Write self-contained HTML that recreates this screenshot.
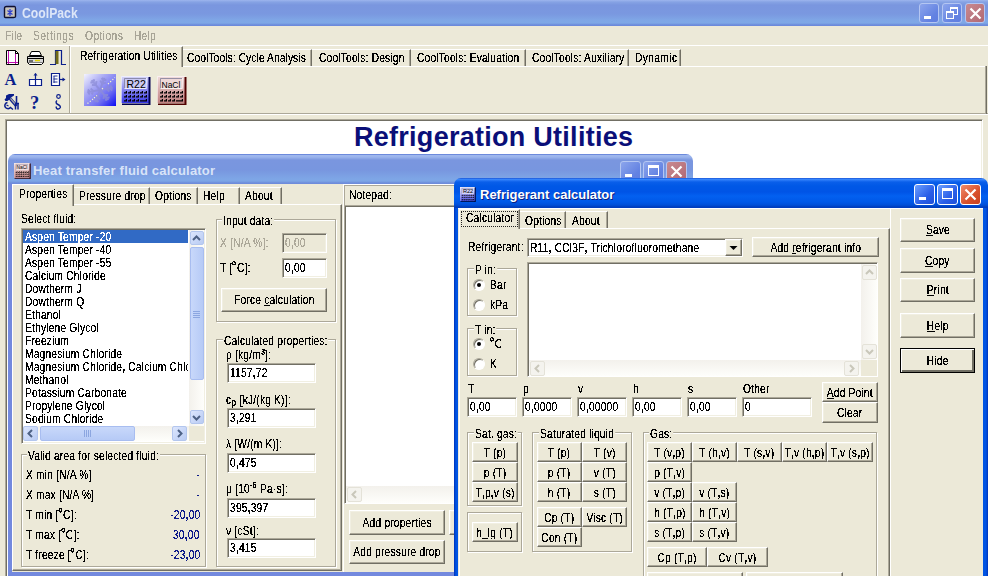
<!DOCTYPE html><html><head><meta charset="utf-8"><style>
*{margin:0;padding:0;box-sizing:border-box}
html,body{width:988px;height:576px;overflow:hidden;background:#ECE9D8;position:relative}
body>div,div>div{position:absolute}
.t{font:11px/13px "Liberation Sans",sans-serif;letter-spacing:0.2px;white-space:nowrap;color:#000;height:13px}
.i{display:inline-block;transform:scale(0.93,1.15);transform-origin:0 7px}
.s{display:inline-block;transform:scale(0.93,1.15);letter-spacing:0.2px}
.edit .s{transform-origin:0 50%}
.f{display:inline-block;width:max-content;filter:url(#th)}
.glab{background:#ECE9D8;padding:0 1px}
.btn{font:11px "Liberation Sans",sans-serif;text-align:center;white-space:nowrap;background:#ECE9D8;
 border:1px solid;border-color:#fff #716F64 #716F64 #fff;box-shadow:inset -1px -1px #ACA899,inset 1px 1px #F1EFE2}
.dbtn{border:1px solid #000;box-shadow:inset 1px 1px #fff,inset -2px -2px #716F64,inset -1px -1px #ACA899}
.edit{font:11px "Liberation Sans",sans-serif;white-space:nowrap;background:#fff;padding-left:2px;
 border:1px solid;border-color:#ACA899 #fff #fff #ACA899;box-shadow:inset 1px 1px #716F64,inset -1px -1px #F1EFE2}
.dis{background:#ECE9D8;color:#ACA899}
.grp{border:1px solid #ACA899;box-shadow:inset 1px 1px #fff,1px 1px #fff}
.sunk{border:1px solid;border-color:#ACA899 #fff #fff #ACA899;box-shadow:inset 1px 1px #716F64,inset -1px -1px #F1EFE2}
.raise{border:1px solid;border-color:#fff #716F64 #716F64 #fff;box-shadow:inset -1px -1px #ACA899,inset 1px 1px #F1EFE2}
.u{text-decoration:underline}
</style></head><body><svg width="0" height="0" style="position:absolute"><filter id="th" x="-10%" y="-50%" width="120%" height="200%"><feComponentTransfer><feFuncA type="discrete" tableValues="0 0 0 0 1 1 1 1 1 1 1"/></feComponentTransfer></filter></svg><div style="left:0px;top:0px;width:988px;height:26px;background:linear-gradient(#9DB5EE 0,#86A3E4 2px,#7A96DF 5px,#7A98E0 14px,#7FA6E6 20px,#7EA8E6 23px,#6C8ADB 25px,#6C8ADB 26px)"></div>
<svg style="position:absolute;left:3px;top:5px" width="14" height="14"><path d="M1.5 3.5Q1.5 1.5 3.5 1.5H11.5Q12.5 1.5 12.5 3.5V11.5Q12.5 12.5 10.5 12.5H2.5Q1.5 12.5 1.5 11.5Z" fill="#C8C4B8" stroke="#101030" stroke-width="1.4"/><path d="M3 2.5H11" stroke="#8888A0"/><path d="M7 4V11M4.5 5.5L9.5 9.5M9.5 5.5L4.5 9.5" stroke="#3040D0" stroke-width="1.3"/></svg>
<div class="tb" style="left:22px;top:5px;font:bold 13px/18px 'Liberation Sans',sans-serif;color:#DCE6F8;white-space:nowrap;transform:scale(0.94,1.1);transform-origin:0 13px">CoolPack</div>
<div style="left:919px;top:3px;width:20px;height:20px;border:1px solid #B4C6F2;border-radius:3px;background:linear-gradient(135deg,#8CA5EC,#6382E2 70%,#5F7EE0)"></div>
<div style="left:924px;top:16px;width:7px;height:3px;background:#fff"></div>
<div style="left:942px;top:3px;width:20px;height:20px;border:1px solid #B4C6F2;border-radius:3px;background:linear-gradient(135deg,#8CA5EC,#6382E2 70%,#5F7EE0)"></div>
<div style="left:950px;top:7px;width:8px;height:8px;border:1px solid #fff;border-top-width:2px"></div>
<div style="left:946px;top:11px;width:8px;height:8px;border:1px solid #fff;border-top-width:2px;background:#7690E0"></div>
<div style="left:965px;top:3px;width:20px;height:20px;border:1px solid #B4C6F2;border-radius:3px;background:linear-gradient(135deg,#C98A90,#B06874)"></div>
<svg style="position:absolute;left:965px;top:3px" width="21" height="21"><path d="M5.5 5.5L15.5 15.5M15.5 5.5L5.5 15.5" stroke="#fff" stroke-width="2.2"/></svg>
<div class="t" style="left:5px;top:30px;color:#A8A597;letter-spacing:0.2px"><span class="f"><span class="i">File</span></span></div>
<div class="t" style="left:33px;top:30px;color:#A8A597;letter-spacing:0.55px"><span class="f"><span class="i">Settings</span></span></div>
<div class="t" style="left:85px;top:30px;color:#A8A597;letter-spacing:0.45px"><span class="f"><span class="i">Options</span></span></div>
<div class="t" style="left:134px;top:30px;color:#A8A597;letter-spacing:0.2px"><span class="f"><span class="i">Help</span></span></div>
<div style="left:0px;top:45px;width:988px;height:1px;background:#fff"></div>
<div style="left:69px;top:46px;width:1px;height:67px;background:#ACA899"></div>
<div style="left:70px;top:46px;width:1px;height:67px;background:#fff"></div>
<div style="left:0px;top:113px;width:988px;height:1px;background:#ACA899"></div>
<div style="left:0px;top:114px;width:988px;height:1px;background:#fff"></div>
<div style="left:71px;top:66px;width:916px;height:1px;background:#fff"></div>
<div style="left:985px;top:66px;width:1px;height:47px;background:#ACA899"></div>
<div style="left:986px;top:66px;width:1px;height:48px;background:#716F64"></div>
<div style="left:70px;top:46px;width:113px;height:21px;background:#ECE9D8;border-left:1px solid #fff;border-top:1px solid #fff;border-right:1px solid #716F64;box-shadow:inset -1px 0 #ACA899"></div>
<div class="t" style="left:80px;top:50px;letter-spacing:0.15px"><span class="f"><span class="i">Refrigeration Utilities</span></span></div>
<div style="left:183px;top:49px;width:129px;height:17px;border-top:1px solid #fff;border-right:1px solid #716F64;box-shadow:inset -1px 0 #ACA899"></div>
<div class="t" style="left:187px;top:52px;letter-spacing:0.1px"><span class="f"><span class="i">CoolTools: Cycle Analysis</span></span></div>
<div style="left:312px;top:49px;width:99px;height:17px;border-top:1px solid #fff;border-right:1px solid #716F64;box-shadow:inset -1px 0 #ACA899"></div>
<div class="t" style="left:319px;top:52px;letter-spacing:0.2px"><span class="f"><span class="i">CoolTools: Design</span></span></div>
<div style="left:411px;top:49px;width:115px;height:17px;border-top:1px solid #fff;border-right:1px solid #716F64;box-shadow:inset -1px 0 #ACA899"></div>
<div class="t" style="left:417px;top:52px;letter-spacing:0.2px"><span class="f"><span class="i">CoolTools: Evaluation</span></span></div>
<div style="left:526px;top:49px;width:103px;height:17px;border-top:1px solid #fff;border-right:1px solid #716F64;box-shadow:inset -1px 0 #ACA899"></div>
<div class="t" style="left:532px;top:52px;letter-spacing:0.2px"><span class="f"><span class="i">CoolTools: Auxiliary</span></span></div>
<div style="left:629px;top:49px;width:52px;height:17px;border-top:1px solid #fff;border-right:1px solid #716F64;box-shadow:inset -1px 0 #ACA899"></div>
<div class="t" style="left:635px;top:52px;letter-spacing:0.4px"><span class="f"><span class="i">Dynamic</span></span></div>

<svg style="position:absolute;left:0;top:46px" width="70" height="66">
 <!-- page -->
 <path d="M6.5 4.5H15.5L18.5 7.5V18.5H6.5Z" fill="#fff" stroke="#000"/>
 <path d="M8.5 5V18M15.5 5V18M7 16.5H18" stroke="#C010B0" stroke-width="1"/>
 <path d="M15.5 4.5V7.5H18.5" fill="none" stroke="#000"/>
 <!-- printer -->
 <path d="M31.5 5.5H39.5L41.5 9.5H29.5Z" fill="#fff" stroke="#000"/>
 <path d="M27.5 10.5H43.5V16.5H27.5Z" fill="#D8D8D8" stroke="#000"/>
 <path d="M28 12.5H43M29 15H33" stroke="#000"/>
 <path d="M35 14.5H40" stroke="#E0D000" stroke-width="1.5"/>
 <path d="M27.5 16.5L29.5 18.5H41.5L43.5 16.5" fill="#fff" stroke="#000"/>
 <!-- exit -->
 <path d="M50 18.5H55.5V4.5H61.5V18.5H66" fill="none" stroke="#0A1E8C" stroke-width="1.2"/>
 <rect x="55.5" y="5" width="3" height="13" fill="#706A18"/>
 <!-- A -->
 <text x="4.5" y="39" font-family="Liberation Serif" font-weight="bold" font-size="16.5" fill="#0A1E8C">A</text>
 <!-- box arrow up -->
 <path d="M29.5 33.5H41.5V39.5H29.5ZM35.5 33.5V39.5M35.5 33V27.5" fill="#fff" stroke="#0A1E8C" stroke-width="1.2"/>
 <path d="M33.5 29.5L35.5 27L37.5 29.5Z" fill="#0A1E8C"/>
 <!-- box arrow right -->
 <path d="M51.5 27.5H59.5V39.5H51.5Z" fill="#fff" stroke="#0A1E8C" stroke-width="1.2"/>
 <path d="M53.5 30H57.5M53.5 33H57.5M53.5 36H57.5M54 30V37" stroke="#0A1E8C" stroke-width="0.9"/>
 <path d="M59.5 33.5H63.5" stroke="#0A1E8C" stroke-width="1.2"/>
 <path d="M62.5 31.5L65.5 33.5L62.5 35.5Z" fill="#0A1E8C"/>
 <!-- tools -->
 <path d="M6 49.5L9 48H14V49.5L11 51.5L9.5 53.5L7.5 55H5.5L4.5 53.5L6 52Z" fill="#0A1E8C"/>
 <path d="M10 52.5L16.5 60" stroke="#0A1E8C" stroke-width="3"/>
 <path d="M10.5 52.5L16 59" stroke="#A8A8A8" stroke-width="1.2"/>
 <path d="M16.5 50V57" stroke="#0A1E8C" stroke-width="1.6"/>
 <path d="M15.5 57.5V63.5M18 57.5V63.5" stroke="#0A1E8C" stroke-width="1.5"/>
 <path d="M15 57.5H19" stroke="#0A1E8C" stroke-width="1.5"/>
 <path d="M7.5 56.5C5 57 4 59.5 5.5 61.5C7 63 9.5 63 10.5 61.5L13 63.5" fill="none" stroke="#0A1E8C" stroke-width="1.5"/>
 <path d="M6.5 59L8.5 60" stroke="#0A1E8C" stroke-width="1.2"/>
 <!-- ? -->
 <text x="30" y="63" font-family="Liberation Serif" font-weight="bold" font-size="18.5" fill="#0A1E8C">?</text>
 <!-- i chain -->
 <circle cx="58.5" cy="50.5" r="1.8" fill="none" stroke="#0A1E8C" stroke-width="1.2"/>
 <path d="M57 54.5C55 56 56.5 58 58 58.5C60 59.5 61.5 61 59.5 62.5C57.5 64 55.5 62 56.5 60.5" fill="none" stroke="#0A1E8C" stroke-width="1.4"/>
</svg>

<svg style="position:absolute;left:84px;top:74px" width="32" height="32">
<defs><linearGradient id="sg" x1="0" y1="0" x2="1" y2="1"><stop offset="0" stop-color="#F4F4FE"/><stop offset="0.35" stop-color="#A8A8F4"/><stop offset="0.7" stop-color="#6A6AF2"/><stop offset="1" stop-color="#0A0AF4"/></linearGradient></defs>
<rect width="32" height="32" fill="url(#sg)"/>
<g stroke="#8C8CD8" stroke-width="2" fill="none" opacity="0.75"><g transform="rotate(20 16 16)"><path d="M16 16V3M13 7L16 9.5L19 7M13.5 4L16 6L18.5 4"/></g><g transform="rotate(80 16 16)"><path d="M16 16V3M13 7L16 9.5L19 7M13.5 4L16 6L18.5 4"/></g><g transform="rotate(140 16 16)"><path d="M16 16V3M13 7L16 9.5L19 7M13.5 4L16 6L18.5 4"/></g><g transform="rotate(200 16 16)"><path d="M16 16V3M13 7L16 9.5L19 7M13.5 4L16 6L18.5 4"/></g><g transform="rotate(260 16 16)"><path d="M16 16V3M13 7L16 9.5L19 7M13.5 4L16 6L18.5 4"/></g><g transform="rotate(320 16 16)"><path d="M16 16V3M13 7L16 9.5L19 7M13.5 4L16 6L18.5 4"/></g></g>
<path d="M3.5 29.5L9 25M10 24L13 21.5M18 15L20 13.5M24 10L31 3.5" stroke="#F8F8C8" stroke-width="1.2" stroke-dasharray="1.2 1.8" fill="none"/>
</svg>
<svg style="position:absolute;left:121px;top:76px" width="30" height="29" viewBox="0 0 30 29" preserveAspectRatio="none">
<defs><linearGradient id="g121" x1="0" y1="0" x2="0" y2="1"><stop offset="0" stop-color="#D8D8F8"/><stop offset="1" stop-color="#3838E8"/></linearGradient></defs>
<rect x="0" y="0" width="28" height="27" fill="url(#g121)"/>
<path d="M0.5 27V0.5H28" stroke="#fff" stroke-width="1" fill="none" opacity="0.6"/>
<path d="M28.5 1V28.5H1" stroke="#000050" stroke-width="2" fill="none"/>
<rect x="3" y="2" width="22" height="11" fill="#C8C8F4"/>
<path d="M3.5 12.5V2.5H25" stroke="#707090" fill="none" opacity="0.7"/>
<path d="M3.5 12.5H25.5V2" stroke="#fff" fill="none" opacity="0.6"/>
<text x="5.5" y="11.5" font-family="Liberation Sans" font-size="10.5" fill="#000">R22</text>
<g fill="#000"><path d="M3 17.5h3v-2.5h-1.2v1.3h-1.8z"/><path d="M7 17.5h3v-2.5h-1.2v1.3h-1.8z"/><path d="M11 17.5h3v-2.5h-1.2v1.3h-1.8z"/><path d="M15 17.5h3v-2.5h-1.2v1.3h-1.8z"/><path d="M19 17.5h3v-2.5h-1.2v1.3h-1.8z"/><path d="M23 17.5h3v-2.5h-1.2v1.3h-1.8z"/><path d="M3 21.5h3v-2.5h-1.2v1.3h-1.8z"/><path d="M7 21.5h3v-2.5h-1.2v1.3h-1.8z"/><path d="M11 21.5h3v-2.5h-1.2v1.3h-1.8z"/><path d="M15 21.5h3v-2.5h-1.2v1.3h-1.8z"/><path d="M19 21.5h3v-2.5h-1.2v1.3h-1.8z"/><path d="M23 21.5h3v-2.5h-1.2v1.3h-1.8z"/><path d="M3 25.5h3v-2.5h-1.2v1.3h-1.8z"/><path d="M7 25.5h3v-2.5h-1.2v1.3h-1.8z"/><path d="M11 25.5h3v-2.5h-1.2v1.3h-1.8z"/><path d="M15 25.5h3v-2.5h-1.2v1.3h-1.8z"/><path d="M19 25.5h7v-2.5h-1.2v1.3h-5.8z"/></g>
</svg>
<svg style="position:absolute;left:157px;top:76px" width="30" height="29" viewBox="0 0 30 29" preserveAspectRatio="none">
<defs><linearGradient id="g157" x1="0" y1="0" x2="0" y2="1"><stop offset="0" stop-color="#F0DCDC"/><stop offset="1" stop-color="#C08080"/></linearGradient></defs>
<rect x="0" y="0" width="28" height="27" fill="url(#g157)"/>
<path d="M0.5 27V0.5H28" stroke="#fff" stroke-width="1" fill="none" opacity="0.6"/>
<path d="M28.5 1V28.5H1" stroke="#500000" stroke-width="2" fill="none"/>
<rect x="3" y="2" width="22" height="11" fill="#EED8D8"/>
<path d="M3.5 12.5V2.5H25" stroke="#707090" fill="none" opacity="0.7"/>
<path d="M3.5 12.5H25.5V2" stroke="#fff" fill="none" opacity="0.6"/>
<text x="4.5" y="11.5" font-family="Liberation Sans" font-size="8.5" fill="#000">NaCl</text>
<g fill="#000"><path d="M3 17.5h3v-2.5h-1.2v1.3h-1.8z"/><path d="M7 17.5h3v-2.5h-1.2v1.3h-1.8z"/><path d="M11 17.5h3v-2.5h-1.2v1.3h-1.8z"/><path d="M15 17.5h3v-2.5h-1.2v1.3h-1.8z"/><path d="M19 17.5h3v-2.5h-1.2v1.3h-1.8z"/><path d="M23 17.5h3v-2.5h-1.2v1.3h-1.8z"/><path d="M3 21.5h3v-2.5h-1.2v1.3h-1.8z"/><path d="M7 21.5h3v-2.5h-1.2v1.3h-1.8z"/><path d="M11 21.5h3v-2.5h-1.2v1.3h-1.8z"/><path d="M15 21.5h3v-2.5h-1.2v1.3h-1.8z"/><path d="M19 21.5h3v-2.5h-1.2v1.3h-1.8z"/><path d="M23 21.5h3v-2.5h-1.2v1.3h-1.8z"/><path d="M3 25.5h3v-2.5h-1.2v1.3h-1.8z"/><path d="M7 25.5h3v-2.5h-1.2v1.3h-1.8z"/><path d="M11 25.5h3v-2.5h-1.2v1.3h-1.8z"/><path d="M15 25.5h3v-2.5h-1.2v1.3h-1.8z"/><path d="M19 25.5h7v-2.5h-1.2v1.3h-5.8z"/></g>
</svg>
<div style="left:5px;top:119px;width:978px;height:457px;background:#fff;border-left:1px solid #ACA899;border-top:1px solid #ACA899;border-right:1px solid #fff;box-shadow:inset 1px 1px #716F64,inset -1px 0 #F1EFE2"></div>
<div style="left:354px;top:120px;font:bold 27px/34px 'Liberation Sans',sans-serif;letter-spacing:0.27px;color:#0A0F78;white-space:nowrap">Refrigeration Utilities</div>
<div style="left:8px;top:154px;width:685px;height:30px;background:linear-gradient(#6C8ADB 0,#6C8ADB 1px,#A0B8EE 1px,#9AB4EC 3px,#7A96DF 6px,#7896DF 16px,#7EA6E6 25px,#7DA6E6 27px,#6E8CDB 29px,#6E8CDB 30px);border-radius:7px 7px 0 0"></div>
<div style="left:8px;top:184px;width:4px;height:392px;background:#7389DE"></div>
<div style="left:12px;top:572px;width:443px;height:4px;background:#7389DE"></div>
<div style="left:12px;top:184px;width:443px;height:388px;background:#ECE9D8"></div>
<svg style="position:absolute;left:14px;top:163px" width="17" height="16" viewBox="0 0 30 29" preserveAspectRatio="none">
<defs><linearGradient id="g14" x1="0" y1="0" x2="0" y2="1"><stop offset="0" stop-color="#F0DCDC"/><stop offset="1" stop-color="#C08080"/></linearGradient></defs>
<rect x="0" y="0" width="28" height="27" fill="url(#g14)"/>
<path d="M0.5 27V0.5H28" stroke="#fff" stroke-width="1" fill="none" opacity="0.6"/>
<path d="M28.5 1V28.5H1" stroke="#300000" stroke-width="2" fill="none"/>
<rect x="3" y="2" width="22" height="11" fill="#EED8D8"/>
<path d="M3.5 12.5V2.5H25" stroke="#707090" fill="none" opacity="0.7"/>
<path d="M3.5 12.5H25.5V2" stroke="#fff" fill="none" opacity="0.6"/>
<text x="4.5" y="11.5" font-family="Liberation Sans" font-size="8.5" fill="#000">NaCl</text>
<g fill="#000"><path d="M3 17.5h3v-2.5h-1.2v1.3h-1.8z"/><path d="M7 17.5h3v-2.5h-1.2v1.3h-1.8z"/><path d="M11 17.5h3v-2.5h-1.2v1.3h-1.8z"/><path d="M15 17.5h3v-2.5h-1.2v1.3h-1.8z"/><path d="M19 17.5h3v-2.5h-1.2v1.3h-1.8z"/><path d="M23 17.5h3v-2.5h-1.2v1.3h-1.8z"/><path d="M3 21.5h3v-2.5h-1.2v1.3h-1.8z"/><path d="M7 21.5h3v-2.5h-1.2v1.3h-1.8z"/><path d="M11 21.5h3v-2.5h-1.2v1.3h-1.8z"/><path d="M15 21.5h3v-2.5h-1.2v1.3h-1.8z"/><path d="M19 21.5h3v-2.5h-1.2v1.3h-1.8z"/><path d="M23 21.5h3v-2.5h-1.2v1.3h-1.8z"/><path d="M3 25.5h3v-2.5h-1.2v1.3h-1.8z"/><path d="M7 25.5h3v-2.5h-1.2v1.3h-1.8z"/><path d="M11 25.5h3v-2.5h-1.2v1.3h-1.8z"/><path d="M15 25.5h3v-2.5h-1.2v1.3h-1.8z"/><path d="M19 25.5h7v-2.5h-1.2v1.3h-5.8z"/></g>
</svg>
<div style="left:33px;top:162px;font:bold 13px/18px 'Liberation Sans',sans-serif;letter-spacing:0.2px;color:#D8E4F8;white-space:nowrap">Heat transfer fluid calculator</div>
<div style="left:620px;top:161px;width:21px;height:21px;border:1px solid #B4C6F2;border-radius:3px;background:linear-gradient(135deg,#8CA5EC,#6382E2 70%,#5F7EE0)"></div>
<div style="left:625px;top:174px;width:7px;height:3px;background:#fff"></div>
<div style="left:643px;top:161px;width:21px;height:21px;border:1px solid #B4C6F2;border-radius:3px;background:linear-gradient(135deg,#8CA5EC,#6382E2 70%,#5F7EE0)"></div>
<div style="left:648px;top:165px;width:11px;height:11px;border:1px solid #fff;border-top-width:3px"></div>
<div style="left:666px;top:161px;width:21px;height:21px;border:1px solid #B4C6F2;border-radius:3px;background:linear-gradient(135deg,#C98A90,#B06874)"></div>
<svg style="position:absolute;left:666px;top:161px" width="21" height="21"><path d="M5.5 5.5L15.5 15.5M15.5 5.5L5.5 15.5" stroke="#fff" stroke-width="2.2"/></svg>
<div style="left:12px;top:204px;width:330px;height:367px;border-left:1px solid #fff;border-top:1px solid #fff;border-right:1px solid #716F64;border-bottom:1px solid #716F64;box-shadow:inset -1px -1px #ACA899"></div>
<div style="left:12px;top:184px;width:62px;height:22px;background:#ECE9D8;border-left:1px solid #fff;border-top:1px solid #fff;border-right:1px solid #716F64;box-shadow:inset -1px 0 #ACA899"></div>
<div class="t" style="left:19px;top:188px;"><span class="f"><span class="i">Properties</span></span></div>
<div style="left:74px;top:187px;width:76px;height:17px;border-top:1px solid #fff;border-right:1px solid #716F64;box-shadow:inset -1px 0 #ACA899"></div>
<div class="t" style="left:79px;top:190px;"><span class="f"><span class="i">Pressure drop</span></span></div>
<div style="left:150px;top:187px;width:48px;height:17px;border-top:1px solid #fff;border-right:1px solid #716F64;box-shadow:inset -1px 0 #ACA899"></div>
<div class="t" style="left:155px;top:190px;"><span class="f"><span class="i">Options</span></span></div>
<div style="left:198px;top:187px;width:42px;height:17px;border-top:1px solid #fff;border-right:1px solid #716F64;box-shadow:inset -1px 0 #ACA899"></div>
<div class="t" style="left:203px;top:190px;"><span class="f"><span class="i">Help</span></span></div>
<div style="left:240px;top:187px;width:42px;height:17px;border-top:1px solid #fff;border-right:1px solid #716F64;box-shadow:inset -1px 0 #ACA899"></div>
<div class="t" style="left:245px;top:190px;"><span class="f"><span class="i">About</span></span></div>
<div class="t" style="left:21px;top:213px;"><span class="f"><span class="i">Select fluid:</span></span></div>
<div class="sunk" style="left:21px;top:228px;width:185px;height:216px;background:#fff"></div>
<div style="left:23px;top:230px;width:165px;height:13px;background:#316AC5"></div>
<div class="t" style="left:25px;top:231px;color:#fff;width:163px;overflow:hidden"><span class="f"><span class="i">Aspen Temper -20</span></span></div>
<div class="t" style="left:25px;top:244px;width:163px;overflow:hidden"><span class="f"><span class="i">Aspen Temper -40</span></span></div>
<div class="t" style="left:25px;top:257px;width:163px;overflow:hidden"><span class="f"><span class="i">Aspen Temper -55</span></span></div>
<div class="t" style="left:25px;top:270px;width:163px;overflow:hidden"><span class="f"><span class="i">Calcium Chloride</span></span></div>
<div class="t" style="left:25px;top:283px;width:163px;overflow:hidden"><span class="f"><span class="i">Dowtherm J</span></span></div>
<div class="t" style="left:25px;top:296px;width:163px;overflow:hidden"><span class="f"><span class="i">Dowtherm Q</span></span></div>
<div class="t" style="left:25px;top:309px;width:163px;overflow:hidden"><span class="f"><span class="i">Ethanol</span></span></div>
<div class="t" style="left:25px;top:322px;width:163px;overflow:hidden"><span class="f"><span class="i">Ethylene Glycol</span></span></div>
<div class="t" style="left:25px;top:335px;width:163px;overflow:hidden"><span class="f"><span class="i">Freezium</span></span></div>
<div class="t" style="left:25px;top:348px;width:163px;overflow:hidden"><span class="f"><span class="i">Magnesium Chloride</span></span></div>
<div class="t" style="left:25px;top:361px;width:163px;overflow:hidden"><span class="f"><span class="i">Magnesium Chloride<b style="font-weight:bold">,</b> Calcium Chlo</span></span></div>
<div class="t" style="left:25px;top:374px;width:163px;overflow:hidden"><span class="f"><span class="i">Methanol</span></span></div>
<div class="t" style="left:25px;top:387px;width:163px;overflow:hidden"><span class="f"><span class="i">Potassium Carbonate</span></span></div>
<div class="t" style="left:25px;top:400px;width:163px;overflow:hidden"><span class="f"><span class="i">Propylene Glycol</span></span></div>
<div class="t" style="left:25px;top:413px;width:163px;overflow:hidden"><span class="f"><span class="i">Sodium Chloride</span></span></div>
<div style="left:189px;top:230px;width:15px;height:197px;background:linear-gradient(90deg,#F3F1EC,#FEFEFB)"></div>
<div style="left:190px;top:231px;width:14px;height:14px;background:linear-gradient(135deg,#DCE6FD,#B9CBF3);border:1px solid #B3C6EE;border-radius:2px"></div>
<svg style="position:absolute;left:189px;top:231px" width="15" height="15"><path d="M4 9L7.5 5.5L11 9" stroke="#4D6185" stroke-width="2" fill="none"/></svg>
<div style="left:190px;top:247px;width:14px;height:133px;background:linear-gradient(90deg,#C8D8FA,#B6CAF6);border:1px solid #A8BDF0;border-radius:2px"></div>
<div style="left:193px;top:311px;width:7px;height:1px;background:#8CA6E0"></div>
<div style="left:193px;top:313px;width:7px;height:1px;background:#8CA6E0"></div>
<div style="left:193px;top:315px;width:7px;height:1px;background:#8CA6E0"></div>
<div style="left:193px;top:317px;width:7px;height:1px;background:#8CA6E0"></div>
<div style="left:190px;top:410px;width:14px;height:14px;background:linear-gradient(135deg,#DCE6FD,#B9CBF3);border:1px solid #B3C6EE;border-radius:2px"></div>
<svg style="position:absolute;left:189px;top:410px" width="15" height="15"><path d="M4 6L7.5 9.5L11 6" stroke="#4D6185" stroke-width="2" fill="none"/></svg>
<div style="left:23px;top:426px;width:166px;height:15px;background:linear-gradient(#F3F1EC,#FEFEFB)"></div>
<div style="left:189px;top:426px;width:15px;height:15px;background:#ECE9D8"></div>
<div style="left:23px;top:426px;width:15px;height:15px;background:linear-gradient(135deg,#DCE6FD,#B9CBF3);border:1px solid #B3C6EE;border-radius:2px"></div>
<svg style="position:absolute;left:23px;top:426px" width="15" height="15"><path d="M9 4L5.5 7.5L9 11" stroke="#4D6185" stroke-width="2" fill="none"/></svg>
<div style="left:40px;top:426px;width:95px;height:15px;background:linear-gradient(#C8D8FA,#B6CAF6);border:1px solid #A8BDF0;border-radius:2px"></div>
<div style="left:84px;top:430px;width:1px;height:7px;background:#8CA6E0"></div>
<div style="left:86px;top:430px;width:1px;height:7px;background:#8CA6E0"></div>
<div style="left:88px;top:430px;width:1px;height:7px;background:#8CA6E0"></div>
<div style="left:90px;top:430px;width:1px;height:7px;background:#8CA6E0"></div>
<div style="left:172px;top:426px;width:15px;height:15px;background:linear-gradient(135deg,#DCE6FD,#B9CBF3);border:1px solid #B3C6EE;border-radius:2px"></div>
<svg style="position:absolute;left:172px;top:426px" width="15" height="15"><path d="M6 4L9.5 7.5L6 11" stroke="#4D6185" stroke-width="2" fill="none"/></svg>
<div class="grp" style="left:216px;top:219px;width:120px;height:103px;"></div>
<div class="t" style="left:222px;top:215px;"><span class="i" style="background:#ECE9D8;color:transparent;padding:0 1px">Input data:</span></div>
<div class="t" style="left:223px;top:215px;"><span class="f"><span class="i">Input data:</span></span></div>
<div class="t" style="left:220px;top:237px;color:#ACA899"><span class="f"><span class="i">X [N/A %]:</span></span></div>
<div class="edit dis" style="left:282px;top:233px;width:45px;height:20px;line-height:17px;"><span class="f"><span class="s">0<b style="font-weight:bold">,</b>00</span></span></div>
<div class="t" style="left:220px;top:262px;"><span class="f"><span class="i">T [<span style="display:inline-block;width:4px;height:4px;border:1px solid currentColor;border-radius:50%;vertical-align:6px;margin:0 1px 0 0"></span>C]:</span></span></div>
<div class="edit" style="left:282px;top:258px;width:45px;height:20px;line-height:17px;"><span class="f"><span class="s">0<b style="font-weight:bold">,</b>00</span></span></div>
<div class="btn" style="left:221px;top:288px;width:106px;height:24px;line-height:21px;"><span class="f"><span class="s">Force <span class="u">c</span>alculation</span></span></div>
<div class="grp" style="left:216px;top:339px;width:120px;height:228px;"></div>
<div class="t" style="left:223px;top:335px;"><span class="i" style="background:#ECE9D8;color:transparent;padding:0 1px">Calculated properties:</span></div>
<div class="t" style="left:224px;top:335px;"><span class="f"><span class="i">Calculated properties:</span></span></div>
<div class="t" style="left:226px;top:349px;"><span class="f"><span class="i">ρ [kg/m<sup style="font-size:8px;font-weight:bold;vertical-align:4px;line-height:0">3</sup>]:</span></span></div>
<div class="edit" style="left:227px;top:363px;width:89px;height:20px;line-height:17px;"><span class="f"><span class="s">1157<b style="font-weight:bold">,</b>72</span></span></div>
<div class="t" style="left:226px;top:394px;"><span class="f"><span class="i">c<sub style="font-size:9px;font-weight:bold;vertical-align:-1px;line-height:0">p</sub> [kJ/(kg K)]:</span></span></div>
<div class="edit" style="left:227px;top:408px;width:89px;height:20px;line-height:17px;"><span class="f"><span class="s">3<b style="font-weight:bold">,</b>291</span></span></div>
<div class="t" style="left:226px;top:438px;"><span class="f"><span class="i">λ [W/(m K)]:</span></span></div>
<div class="edit" style="left:227px;top:453px;width:89px;height:20px;line-height:17px;"><span class="f"><span class="s">0<b style="font-weight:bold">,</b>475</span></span></div>
<div class="t" style="left:226px;top:483px;"><span class="f"><span class="i">μ [10<sup style="font-size:8px;font-weight:bold;vertical-align:5px;line-height:0">-5</sup> Pa·s]:</span></span></div>
<div class="edit" style="left:227px;top:498px;width:89px;height:20px;line-height:17px;"><span class="f"><span class="s">395<b style="font-weight:bold">,</b>397</span></span></div>
<div class="t" style="left:226px;top:525px;"><span class="f"><span class="i">ν [cSt]:</span></span></div>
<div class="edit" style="left:227px;top:538px;width:89px;height:20px;line-height:17px;"><span class="f"><span class="s">3<b style="font-weight:bold">,</b>415</span></span></div>
<div class="grp" style="left:21px;top:454px;width:185px;height:113px;"></div>
<div class="t" style="left:27px;top:450px;"><span class="i" style="background:#ECE9D8;color:transparent;padding:0 1px">Valid area for selected fluid:</span></div>
<div class="t" style="left:28px;top:450px;"><span class="f"><span class="i">Valid area for selected fluid:</span></span></div>
<div class="t" style="left:26px;top:469px;"><span class="f"><span class="i">X min [N/A %]</span></span></div>
<div class="t" style="left:0px;width:200px;text-align:right;top:469px;color:#0A1A8A"><span class="f"><span class="i" style="transform-origin:100% 7px">-</span></span></div>
<div class="t" style="left:26px;top:489px;"><span class="f"><span class="i">X max [N/A %]</span></span></div>
<div class="t" style="left:0px;width:200px;text-align:right;top:489px;color:#0A1A8A"><span class="f"><span class="i" style="transform-origin:100% 7px">-</span></span></div>
<div class="t" style="left:26px;top:509px;"><span class="f"><span class="i">T min [<span style="display:inline-block;width:4px;height:4px;border:1px solid currentColor;border-radius:50%;vertical-align:6px;margin:0 1px 0 0"></span>C]:</span></span></div>
<div class="t" style="left:0px;width:200px;text-align:right;top:509px;color:#0A1A8A"><span class="f"><span class="i" style="transform-origin:100% 7px">-20<b style="font-weight:bold">,</b>00</span></span></div>
<div class="t" style="left:26px;top:529px;"><span class="f"><span class="i">T max [<span style="display:inline-block;width:4px;height:4px;border:1px solid currentColor;border-radius:50%;vertical-align:6px;margin:0 1px 0 0"></span>C]:</span></span></div>
<div class="t" style="left:0px;width:200px;text-align:right;top:529px;color:#0A1A8A"><span class="f"><span class="i" style="transform-origin:100% 7px">30<b style="font-weight:bold">,</b>00</span></span></div>
<div class="t" style="left:26px;top:549px;"><span class="f"><span class="i">T freeze [<span style="display:inline-block;width:4px;height:4px;border:1px solid currentColor;border-radius:50%;vertical-align:6px;margin:0 1px 0 0"></span>C]:</span></span></div>
<div class="t" style="left:0px;width:200px;text-align:right;top:549px;color:#0A1A8A"><span class="f"><span class="i" style="transform-origin:100% 7px">-23<b style="font-weight:bold">,</b>00</span></span></div>
<div style="left:343px;top:184px;width:1px;height:388px;background:#fff"></div>
<div style="left:343px;top:184px;width:112px;height:1px;background:#fff"></div>
<div style="left:344px;top:185px;width:1px;height:20px;background:#ACA899"></div>
<div style="left:344px;top:185px;width:111px;height:1px;background:#ACA899"></div>
<div class="t" style="left:349px;top:189px;"><span class="f"><span class="i">Notepad:</span></span></div>
<div style="left:344px;top:205px;width:120px;height:299px;background:#fff;border-left:1px solid #ACA899;border-top:1px solid #ACA899;border-bottom:1px solid #fff;box-shadow:inset 1px 1px #716F64"></div>
<div style="left:346px;top:486px;width:109px;height:17px;background:linear-gradient(#F3F1EC,#FEFEFB)"></div>
<div style="left:347px;top:487px;width:15px;height:15px;background:#F4F3EE;border:1px solid #E4E2D8;border-radius:2px"></div>
<svg style="position:absolute;left:347px;top:487px" width="15" height="15"><path d="M9 4L5.5 7.5L9 11" stroke="#C9C7BA" stroke-width="2" fill="none"/></svg>
<div class="btn" style="left:349px;top:510px;width:96px;height:25px;line-height:22px;"><span class="f"><span class="s">Add properties</span></span></div>
<div class="btn" style="left:349px;top:540px;width:96px;height:24px;line-height:21px;"><span class="f"><span class="s">Add pressure drop</span></span></div>
<div class="btn" style="left:449px;top:510px;width:21px;height:25px;line-height:22px;"><span class="f"><span class="s"></span></span></div>
<div style="left:454px;top:178px;width:534px;height:30px;background:linear-gradient(#0A3FC8 0,#3D8CFF 1px,#2C7CF8 2px,#0A5FEA 4px,#0058E6 8px,#0054E6 14px,#0360F0 18px,#0058E8 24px,#004FD8 27px,#003DBE 29px,#003DBE 30px);border-radius:7px 7px 0 0"></div>
<div style="left:454px;top:208px;width:4px;height:368px;background:linear-gradient(90deg,#0032B8,#0054E3 2px,#0054E3)"></div>
<div style="left:983px;top:208px;width:5px;height:368px;background:linear-gradient(90deg,#0054E3,#0054E3 3px,#0032B8)"></div>
<div style="left:458px;top:208px;width:525px;height:368px;background:#ECE9D8"></div>
<svg style="position:absolute;left:460px;top:187px" width="16" height="15" viewBox="0 0 30 29" preserveAspectRatio="none">
<defs><linearGradient id="g460" x1="0" y1="0" x2="0" y2="1"><stop offset="0" stop-color="#E8E8FC"/><stop offset="1" stop-color="#5050E0"/></linearGradient></defs>
<rect x="0" y="0" width="28" height="27" fill="url(#g460)"/>
<path d="M0.5 27V0.5H28" stroke="#fff" stroke-width="1" fill="none" opacity="0.6"/>
<path d="M28.5 1V28.5H1" stroke="#000030" stroke-width="2" fill="none"/>
<rect x="3" y="2" width="22" height="11" fill="#D0D0F8"/>
<path d="M3.5 12.5V2.5H25" stroke="#707090" fill="none" opacity="0.7"/>
<path d="M3.5 12.5H25.5V2" stroke="#fff" fill="none" opacity="0.6"/>
<text x="5.5" y="11.5" font-family="Liberation Sans" font-size="10.5" fill="#000">R22</text>
<g fill="#000"><path d="M3 17.5h3v-2.5h-1.2v1.3h-1.8z"/><path d="M7 17.5h3v-2.5h-1.2v1.3h-1.8z"/><path d="M11 17.5h3v-2.5h-1.2v1.3h-1.8z"/><path d="M15 17.5h3v-2.5h-1.2v1.3h-1.8z"/><path d="M19 17.5h3v-2.5h-1.2v1.3h-1.8z"/><path d="M23 17.5h3v-2.5h-1.2v1.3h-1.8z"/><path d="M3 21.5h3v-2.5h-1.2v1.3h-1.8z"/><path d="M7 21.5h3v-2.5h-1.2v1.3h-1.8z"/><path d="M11 21.5h3v-2.5h-1.2v1.3h-1.8z"/><path d="M15 21.5h3v-2.5h-1.2v1.3h-1.8z"/><path d="M19 21.5h3v-2.5h-1.2v1.3h-1.8z"/><path d="M23 21.5h3v-2.5h-1.2v1.3h-1.8z"/><path d="M3 25.5h3v-2.5h-1.2v1.3h-1.8z"/><path d="M7 25.5h3v-2.5h-1.2v1.3h-1.8z"/><path d="M11 25.5h3v-2.5h-1.2v1.3h-1.8z"/><path d="M15 25.5h3v-2.5h-1.2v1.3h-1.8z"/><path d="M19 25.5h7v-2.5h-1.2v1.3h-5.8z"/></g>
</svg>
<div style="left:480px;top:186px;font:bold 13px/18px 'Liberation Sans',sans-serif;color:#fff;white-space:nowrap;text-shadow:1px 1px #0A1E80">Refrigerant calculator</div>
<div style="left:914px;top:184px;width:21px;height:21px;border:1px solid #fff;border-radius:3px;background:linear-gradient(135deg,#6CA0FF,#2B5FE8 60%,#1F4FD8)"></div>
<div style="left:919px;top:197px;width:7px;height:3px;background:#fff"></div>
<div style="left:937px;top:184px;width:21px;height:21px;border:1px solid #fff;border-radius:3px;background:linear-gradient(135deg,#6CA0FF,#2B5FE8 60%,#1F4FD8)"></div>
<div style="left:942px;top:188px;width:11px;height:11px;border:1px solid #fff;border-top-width:3px"></div>
<div style="left:960px;top:184px;width:21px;height:21px;border:1px solid #fff;border-radius:3px;background:linear-gradient(135deg,#F08C6C,#D8502C 60%,#C84020)"></div>
<svg style="position:absolute;left:960px;top:184px" width="21" height="21"><path d="M5.5 5.5L15.5 15.5M15.5 5.5L5.5 15.5" stroke="#fff" stroke-width="2.2"/></svg>
<div style="left:458px;top:208px;width:525px;height:1px;background:#fff"></div>
<div style="left:459px;top:228px;width:431px;height:360px;border-left:1px solid #fff;border-top:1px solid #fff;border-right:1px solid #716F64;box-shadow:inset -1px 0 #ACA899"></div>
<div style="left:459px;top:209px;width:61px;height:20px;background:#ECE9D8;border-left:1px solid #fff;border-top:1px solid #fff;border-right:1px solid #716F64;box-shadow:inset -1px 0 #ACA899"></div>
<div style="left:461px;top:211px;width:57px;height:16px;border:1px dotted #222"></div>
<div class="t" style="left:466px;top:212px;"><span class="f"><span class="i">Calculator</span></span></div>
<div style="left:520px;top:211px;width:46px;height:17px;border-top:1px solid #fff;border-right:1px solid #716F64;box-shadow:inset -1px 0 #ACA899"></div>
<div class="t" style="left:525px;top:215px;"><span class="f"><span class="i">Options</span></span></div>
<div style="left:566px;top:211px;width:42px;height:17px;border-top:1px solid #fff;border-right:1px solid #716F64;box-shadow:inset -1px 0 #ACA899"></div>
<div class="t" style="left:572px;top:215px;"><span class="f"><span class="i">About</span></span></div>
<div style="left:890px;top:208px;width:1px;height:368px;background:#fff"></div>
<div class="t" style="left:468px;top:241px;"><span class="f"><span class="i">Refrigerant:</span></span></div>
<div class="edit" style="left:527px;top:238px;width:216px;height:19px;line-height:16px;"><span class="f"><span class="s">R11<b style="font-weight:bold">,</b> CCl3F<b style="font-weight:bold">,</b> Trichlorofluoromethane</span></span></div>
<div class="raise" style="left:725px;top:239px;width:17px;height:17px;background:#ECE9D8"></div>
<svg style="position:absolute;left:725px;top:240px" width="17" height="16"><path d="M4.5 6H12.5L8.5 10Z" fill="#000"/></svg>
<div class="btn" style="left:752px;top:237px;width:127px;height:20px;line-height:18px;"><span class="f"><span class="s">Add <span class="u">r</span>efrigerant info</span></span></div>
<div class="grp" style="left:467px;top:268px;width:50px;height:48px;"></div>
<div class="t" style="left:474px;top:264px;"><span class="i" style="background:#ECE9D8;color:transparent;padding:0 1px">P in:</span></div>
<div class="t" style="left:475px;top:264px;"><span class="f"><span class="i">P in:</span></span></div>
<div class="grp" style="left:467px;top:328px;width:50px;height:48px;"></div>
<div class="t" style="left:474px;top:324px;"><span class="i" style="background:#ECE9D8;color:transparent;padding:0 1px">T in:</span></div>
<div class="t" style="left:475px;top:324px;"><span class="f"><span class="i">T in:</span></span></div>
<div style="left:473px;top:279px;width:12px;height:12px;border-radius:50%;background:#fff;border:1px solid;border-color:#ACA899 #fff #fff #ACA899;box-shadow:inset 1px 1px #716F64"></div>
<div style="left:477px;top:283px;width:4px;height:4px;background:#000;border-radius:50%"></div>
<div class="t" style="left:490px;top:279px;"><span class="f"><span class="i">Bar</span></span></div>
<div style="left:473px;top:299px;width:12px;height:12px;border-radius:50%;background:#fff;border:1px solid;border-color:#ACA899 #fff #fff #ACA899;box-shadow:inset 1px 1px #716F64"></div>
<div class="t" style="left:490px;top:299px;"><span class="f"><span class="i">kPa</span></span></div>
<div style="left:473px;top:338px;width:12px;height:12px;border-radius:50%;background:#fff;border:1px solid;border-color:#ACA899 #fff #fff #ACA899;box-shadow:inset 1px 1px #716F64"></div>
<div style="left:477px;top:342px;width:4px;height:4px;background:#000;border-radius:50%"></div>
<div class="t" style="left:490px;top:338px;"><span class="f"><span class="i"><span style="display:inline-block;width:4px;height:4px;border:1px solid currentColor;border-radius:50%;vertical-align:6px;margin:0 1px 0 0"></span>C</span></span></div>
<div style="left:473px;top:358px;width:12px;height:12px;border-radius:50%;background:#fff;border:1px solid;border-color:#ACA899 #fff #fff #ACA899;box-shadow:inset 1px 1px #716F64"></div>
<div class="t" style="left:490px;top:358px;"><span class="f"><span class="i">K</span></span></div>
<div class="sunk" style="left:527px;top:262px;width:351px;height:115px;background:#fff"></div>
<div style="left:529px;top:360px;width:333px;height:16px;background:linear-gradient(#F3F1EC,#FEFEFB)"></div>
<div style="left:861px;top:264px;width:16px;height:96px;background:linear-gradient(90deg,#F3F1EC,#FEFEFB)"></div>
<div style="left:861px;top:360px;width:16px;height:16px;background:#ECE9D8"></div>
<div style="left:530px;top:361px;width:15px;height:15px;background:#F4F3EE;border:1px solid #E4E2D8;border-radius:2px"></div>
<svg style="position:absolute;left:530px;top:361px" width="15" height="15"><path d="M9 4L5.5 7.5L9 11" stroke="#C9C7BA" stroke-width="2" fill="none"/></svg>
<div style="left:844px;top:361px;width:15px;height:15px;background:#F4F3EE;border:1px solid #E4E2D8;border-radius:2px"></div>
<svg style="position:absolute;left:844px;top:361px" width="15" height="15"><path d="M6 4L9.5 7.5L6 11" stroke="#C9C7BA" stroke-width="2" fill="none"/></svg>
<div style="left:862px;top:265px;width:15px;height:15px;background:#F4F3EE;border:1px solid #E4E2D8;border-radius:2px"></div>
<svg style="position:absolute;left:862px;top:265px" width="15" height="15"><path d="M4 9L7.5 5.5L11 9" stroke="#C9C7BA" stroke-width="2" fill="none"/></svg>
<div style="left:862px;top:344px;width:15px;height:15px;background:#F4F3EE;border:1px solid #E4E2D8;border-radius:2px"></div>
<svg style="position:absolute;left:862px;top:344px" width="15" height="15"><path d="M4 6L7.5 9.5L11 6" stroke="#C9C7BA" stroke-width="2" fill="none"/></svg>
<div class="t" style="left:468px;top:383px;"><span class="f"><span class="i">T</span></span></div>
<div class="edit" style="left:467px;top:397px;width:50px;height:20px;line-height:17px;"><span class="f"><span class="s">0<b style="font-weight:bold">,</b>00</span></span></div>
<div class="t" style="left:523px;top:383px;"><span class="f"><span class="i">p</span></span></div>
<div class="edit" style="left:522px;top:397px;width:50px;height:20px;line-height:17px;"><span class="f"><span class="s">0<b style="font-weight:bold">,</b>0000</span></span></div>
<div class="t" style="left:578px;top:383px;"><span class="f"><span class="i">v</span></span></div>
<div class="edit" style="left:577px;top:397px;width:50px;height:20px;line-height:17px;"><span class="f"><span class="s">0<b style="font-weight:bold">,</b>00000</span></span></div>
<div class="t" style="left:633px;top:383px;"><span class="f"><span class="i">h</span></span></div>
<div class="edit" style="left:632px;top:397px;width:50px;height:20px;line-height:17px;"><span class="f"><span class="s">0<b style="font-weight:bold">,</b>00</span></span></div>
<div class="t" style="left:688px;top:383px;"><span class="f"><span class="i">s</span></span></div>
<div class="edit" style="left:687px;top:397px;width:50px;height:20px;line-height:17px;"><span class="f"><span class="s">0<b style="font-weight:bold">,</b>00</span></span></div>
<div class="t" style="left:743px;top:383px;"><span class="f"><span class="i">Other</span></span></div>
<div class="edit" style="left:742px;top:397px;width:70px;height:20px;line-height:17px;"><span class="f"><span class="s">0</span></span></div>
<div class="btn" style="left:822px;top:382px;width:56px;height:20px;line-height:18px;"><span class="f"><span class="s"><span class="u">A</span>dd Point</span></span></div>
<div class="btn" style="left:822px;top:402px;width:56px;height:21px;line-height:19px;"><span class="f"><span class="s">Clear</span></span></div>
<div class="grp" style="left:467px;top:432px;width:55px;height:74px;"></div>
<div class="t" style="left:474px;top:428px;"><span class="i" style="background:#ECE9D8;color:transparent;padding:0 1px">Sat. gas:</span></div>
<div class="t" style="left:475px;top:428px;"><span class="f"><span class="i">Sat. gas:</span></span></div>
<div class="grp" style="left:467px;top:512px;width:55px;height:40px;"></div>
<div class="grp" style="left:532px;top:432px;width:100px;height:120px;"></div>
<div class="t" style="left:539px;top:428px;"><span class="i" style="background:#ECE9D8;color:transparent;padding:0 1px">Saturated liquid</span></div>
<div class="t" style="left:540px;top:428px;"><span class="f"><span class="i">Saturated liquid</span></span></div>
<div class="grp" style="left:643px;top:432px;width:234px;height:168px;"></div>
<div class="t" style="left:649px;top:428px;"><span class="i" style="background:#ECE9D8;color:transparent;padding:0 1px">Gas:</span></div>
<div class="t" style="left:650px;top:428px;"><span class="f"><span class="i">Gas:</span></span></div>
<div class="btn" style="left:472px;top:442px;width:46px;height:20px;line-height:18px;"><span class="f"><span class="s">T (p)</span></span></div>
<div class="btn" style="left:472px;top:462px;width:46px;height:20px;line-height:18px;"><span class="f"><span class="s">p (T)</span></span></div>
<div class="btn" style="left:472px;top:482px;width:46px;height:20px;line-height:18px;"><span class="f"><span class="s">T<b style="font-weight:bold">,</b>p<b style="font-weight:bold">,</b>v (s)</span></span></div>
<div class="btn" style="left:472px;top:522px;width:46px;height:20px;line-height:18px;"><span class="f"><span class="s">h<span style="display:inline-block;width:6px;height:10px;border-bottom:1px solid #000;vertical-align:-2px"></span>lg (T)</span></span></div>
<div class="btn" style="left:537px;top:442px;width:45px;height:20px;line-height:18px;"><span class="f"><span class="s">T (p)</span></span></div>
<div class="btn" style="left:582px;top:442px;width:45px;height:20px;line-height:18px;"><span class="f"><span class="s">T (v)</span></span></div>
<div class="btn" style="left:537px;top:462px;width:45px;height:20px;line-height:18px;"><span class="f"><span class="s">p (T)</span></span></div>
<div class="btn" style="left:582px;top:462px;width:45px;height:20px;line-height:18px;"><span class="f"><span class="s">v (T)</span></span></div>
<div class="btn" style="left:537px;top:482px;width:45px;height:20px;line-height:18px;"><span class="f"><span class="s">h (T)</span></span></div>
<div class="btn" style="left:582px;top:482px;width:45px;height:20px;line-height:18px;"><span class="f"><span class="s">s (T)</span></span></div>
<div class="btn" style="left:537px;top:507px;width:45px;height:20px;line-height:18px;"><span class="f"><span class="s">Cp (T)</span></span></div>
<div class="btn" style="left:582px;top:507px;width:45px;height:20px;line-height:18px;"><span class="f"><span class="s">Visc (T)</span></span></div>
<div class="btn" style="left:537px;top:527px;width:45px;height:20px;line-height:18px;"><span class="f"><span class="s">Con (T)</span></span></div>
<div class="btn" style="left:647px;top:442px;width:45px;height:20px;line-height:18px;"><span class="f"><span class="s">T (v<b style="font-weight:bold">,</b>p)</span></span></div>
<div class="btn" style="left:692px;top:442px;width:45px;height:20px;line-height:18px;"><span class="f"><span class="s">T (h<b style="font-weight:bold">,</b>v)</span></span></div>
<div class="btn" style="left:737px;top:442px;width:45px;height:20px;line-height:18px;"><span class="f"><span class="s">T (s<b style="font-weight:bold">,</b>v)</span></span></div>
<div class="btn" style="left:782px;top:442px;width:45px;height:20px;line-height:18px;"><span class="f"><span class="s">T<b style="font-weight:bold">,</b>v (h<b style="font-weight:bold">,</b>p)</span></span></div>
<div class="btn" style="left:827px;top:442px;width:46px;height:20px;line-height:18px;"><span class="f"><span class="s">T<b style="font-weight:bold">,</b>v (s<b style="font-weight:bold">,</b>p)</span></span></div>
<div class="btn" style="left:647px;top:462px;width:45px;height:20px;line-height:18px;"><span class="f"><span class="s">p (T<b style="font-weight:bold">,</b>v)</span></span></div>
<div class="btn" style="left:647px;top:482px;width:45px;height:20px;line-height:18px;"><span class="f"><span class="s">v (T<b style="font-weight:bold">,</b>p)</span></span></div>
<div class="btn" style="left:692px;top:482px;width:45px;height:20px;line-height:18px;"><span class="f"><span class="s">v (T<b style="font-weight:bold">,</b>s)</span></span></div>
<div class="btn" style="left:647px;top:502px;width:45px;height:20px;line-height:18px;"><span class="f"><span class="s">h (T<b style="font-weight:bold">,</b>p)</span></span></div>
<div class="btn" style="left:692px;top:502px;width:45px;height:20px;line-height:18px;"><span class="f"><span class="s">h (T<b style="font-weight:bold">,</b>v)</span></span></div>
<div class="btn" style="left:647px;top:522px;width:45px;height:20px;line-height:18px;"><span class="f"><span class="s">s (T<b style="font-weight:bold">,</b>p)</span></span></div>
<div class="btn" style="left:692px;top:522px;width:45px;height:20px;line-height:18px;"><span class="f"><span class="s">s (T<b style="font-weight:bold">,</b>v)</span></span></div>
<div class="btn" style="left:647px;top:547px;width:60px;height:20px;line-height:18px;"><span class="f"><span class="s">Cp (T<b style="font-weight:bold">,</b>p)</span></span></div>
<div class="btn" style="left:707px;top:547px;width:61px;height:20px;line-height:18px;"><span class="f"><span class="s">Cv (T<b style="font-weight:bold">,</b>v)</span></span></div>
<div class="btn" style="left:647px;top:572px;width:96px;height:20px;line-height:18px;"><span class="f"><span class="s"></span></span></div>
<div class="btn" style="left:746px;top:572px;width:97px;height:20px;line-height:18px;"><span class="f"><span class="s"></span></span></div>
<div class="btn" style="left:900px;top:218px;width:75px;height:24px;line-height:21px;"><span class="f"><span class="s"><span class="u">S</span>ave</span></span></div>
<div class="btn" style="left:900px;top:248px;width:75px;height:25px;line-height:22px;"><span class="f"><span class="s"><span class="u">C</span>opy</span></span></div>
<div class="btn" style="left:900px;top:278px;width:75px;height:24px;line-height:21px;"><span class="f"><span class="s"><span class="u">P</span>rint</span></span></div>
<div class="btn" style="left:900px;top:313px;width:75px;height:25px;line-height:22px;"><span class="f"><span class="s"><span class="u">H</span>elp</span></span></div>
<div class="btn dbtn" style="left:900px;top:348px;width:75px;height:25px;line-height:22px;"><span class="f"><span class="s">Hide</span></span></div></body></html>
